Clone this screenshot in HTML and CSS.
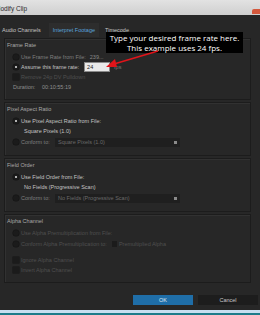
FILE: index.html
```html
<!DOCTYPE html>
<html lang="en">
<head>
    <meta charset="UTF-8">
    <title>Modify Clip</title>
    <link rel="stylesheet" href="styles.css">
</head>
<body>

    <div class="titlebar">
        <span class="title">Modify Clip</span>
        <span class="close-btn"></span>
    </div>

    <div class="tabs">
        <span class="tab">Audio Channels</span>
        <span class="tab active">Interpret Footage</span>
        <span class="tab">Timecode</span>
    </div>

    <!-- Frame Rate -->
    <div class="group">
        <div class="group-label">Frame Rate</div>
        <div class="rows">
            <div class="row"><span class="radio"></span><span class="txt">Use Frame Rate from File:</span><span class="val">239...</span></div>
            <div class="row"><span class="radio on"></span><span class="txt on">Assume this frame rate:</span><span class="field">24</span><span class="unit">fps</span></div>
            <div class="row"><span class="check"></span><span class="txt off">Remove 24p DV Pulldown</span></div>
            <div class="row"><span class="txt dur">Duration:</span><span class="txt dur-val">00:10:55:19</span></div>
        </div>
    </div>

    <!-- Pixel Aspect Ratio -->
    <div class="group">
        <div class="group-label">Pixel Aspect Ratio</div>
        <div class="rows">
            <div class="row"><span class="radio on"></span><span class="txt on">Use Pixel Aspect Ratio from File:</span></div>
            <div class="row sub"><span class="txt on">Square Pixels (1.0)</span></div>
            <div class="row tall"><span class="radio"></span><span class="txt conform">Conform to:</span><span class="dropdown">Square Pixels (1.0)<i></i></span></div>
        </div>
    </div>

    <!-- Field Order -->
    <div class="group">
        <div class="group-label">Field Order</div>
        <div class="rows">
            <div class="row"><span class="radio on"></span><span class="txt on">Use Field Order from File:</span></div>
            <div class="row sub"><span class="txt on">No Fields (Progressive Scan)</span></div>
            <div class="row tall"><span class="radio"></span><span class="txt conform">Conform to:</span><span class="dropdown">No Fields (Progressive Scan)<i></i></span></div>
        </div>
    </div>

    <!-- Alpha Channel -->
    <div class="group last">
        <div class="group-label">Alpha Channel</div>
        <div class="rows">
            <div class="row"><span class="radio"></span><span class="txt off">Use Alpha Premultiplication from File:</span></div>
            <div class="row tall"><span class="radio"></span><span class="txt off">Conform Alpha Premultiplication to:</span><span class="mini-drop"><b></b>Premultiplied Alpha</span></div>
            <div class="row gap"><span class="check"></span><span class="txt off">Ignore Alpha Channel</span></div>
            <div class="row"><span class="check"></span><span class="txt off">Invert Alpha Channel</span></div>
        </div>
    </div>

    <div class="buttons">
        <button class="btn ok">OK</button>
        <button class="btn">Cancel</button>
    </div>

    <div class="taskbar"></div>

    <!-- Callout over the dialog -->
    <div class="callout">Type your desired frame rate here.<br>This example uses 24 fps.</div>
    <svg class="arrow" width="60" height="24" viewBox="0 0 60 24">
        <line x1="52" y1="4" x2="8" y2="17" stroke="#e0141a" stroke-width="1.6"/>
        <polygon points="0,20 9,12 11,20" fill="#e0141a"/>
    </svg>

</body>
</html>
```

FILE: styles.css
```css
body {
    margin: 0;
    width: 260px;
    height: 315px;
    overflow: hidden;
    position: relative;
    background-color: #272727;
    font-family: "Liberation Sans", Arial, sans-serif;
    font-size: 5.5px;
    color: #bdbdbd;
}

.titlebar {
    display: flex;
    align-items: flex-end;
    height: 15px;
    background: linear-gradient(#e2e2e2, #cfcfcf);
    box-sizing: border-box;
    padding-bottom: 3px;
}

.title {
    margin-left: -5px;
    font-size: 6.5px;
    color: #2c2c2c;
}

.close-btn {
    margin-left: auto;
    margin-right: -4px;
    margin-bottom: -2px;
    width: 12px;
    height: 5px;
    background: #d4583c;
    border-radius: 2px 0 0 0;
}

.tabs {
    display: flex;
    height: 14px;
    margin-top: 8px;
    align-items: stretch;
}

.tab {
    display: flex;
    align-items: center;
    padding: 0 4px 0 2px;
    margin-right: 4px;
    font-size: 5.5px;
    color: #c4c4c4;
}

.tab.active {
    color: #5aa3dd;
    background: #2d2d2d;
    padding: 0 4px;
}

.group {
    margin: 1px 9px 2px 4px;
    border: 1px solid #1c1c1c;
    box-shadow: inset 1px 1px 0 #313131;
    padding: 1px 0 7px 0;
}

.group.last {
    margin-bottom: 0;
}

.group-label {
    height: 10px;
    line-height: 10px;
    padding-left: 2px;
    color: #a8a8a8;
}

.rows {
    margin-top: 2px;
}

.row {
    display: flex;
    align-items: center;
    height: 10px;
    padding-left: 8px;
    white-space: nowrap;
}

.row.tall {
    height: 12px;
}

.row.gap {
    margin-top: 5px;
}

.row.sub {
    padding-left: 17px;
}

.radio {
    width: 6px;
    height: 6px;
    border-radius: 50%;
    background: #1b1b1b;
    box-shadow: 0 0 0 0.5px #141414;
    display: flex;
    align-items: center;
    justify-content: center;
}

.radio.on::after {
    content: "";
    width: 2px;
    height: 2px;
    border-radius: 50%;
    background: #e6e6e6;
}

.check {
    width: 6px;
    height: 6px;
    background: #1b1b1b;
    box-shadow: 0 0 0 0.5px #141414;
}

.txt {
    margin-left: 2px;
    color: #7f7f7f;
}

.txt.on {
    color: #c4c4c4;
}

.txt.off {
    color: #4f4f4f;
}

.txt.dur {
    margin-left: 0;
    width: 29px;
    color: #8f8f8f;
}

.txt.dur-val {
    margin-left: 0;
    color: #8f8f8f;
}

.val {
    margin-left: 4px;
    color: #8a8a8a;
}

.field {
    margin-left: 5px;
    width: 22px;
    height: 8px;
    line-height: 8px;
    padding-left: 2px;
    background: #e9e9e9;
    border: 1px solid #8a8a8a;
    color: #222;
}

.unit {
    margin-left: 4px;
    color: #777;
}

.txt.conform {
    width: 34px;
}

.dropdown {
    position: relative;
    width: 122px;
    height: 9px;
    line-height: 9px;
    padding-left: 3px;
    background: #1f1f1f;
    color: #6a6a6a;
}

.dropdown i {
    position: absolute;
    right: 3px;
    top: 3px;
    width: 3px;
    height: 3px;
    background: #8a8a8a;
}

.mini-drop {
    display: flex;
    align-items: center;
    margin-left: 5px;
    color: #4f4f4f;
}

.mini-drop b {
    width: 5px;
    height: 6px;
    margin-right: 2px;
    background: #1b1b1b;
}

.buttons {
    display: flex;
    justify-content: flex-end;
    gap: 5px;
    margin-top: 12px;
    padding-right: 2px;
}

.btn {
    width: 60px;
    height: 10px;
    padding: 0;
    border: none;
    font-family: "Liberation Sans", Arial, sans-serif;
    font-size: 5.5px;
    color: #c8c8c8;
    background: #1d1d1d;
}

.btn.ok {
    background: #1f6ea8;
    color: #dfe9f2;
}

.taskbar {
    position: absolute;
    left: 0;
    bottom: 0;
    width: 260px;
    height: 5px;
    background: linear-gradient(#c7dff0 0, #c7dff0 60%, #1d7c8a 60%);
}

/* callout pasted over the screenshot */
.callout {
    position: absolute;
    left: 106px;
    top: 32px;
    width: 137px;
    height: 21px;
    box-sizing: border-box;
    padding-top: 1px;
    background: #000;
    color: #fff;
    font-family: "Open Sans", sans-serif;
    font-size: 8px;
    line-height: 9.5px;
    text-align: center;
}

.arrow {
    position: absolute;
    left: 106px;
    top: 47px;
}
```
